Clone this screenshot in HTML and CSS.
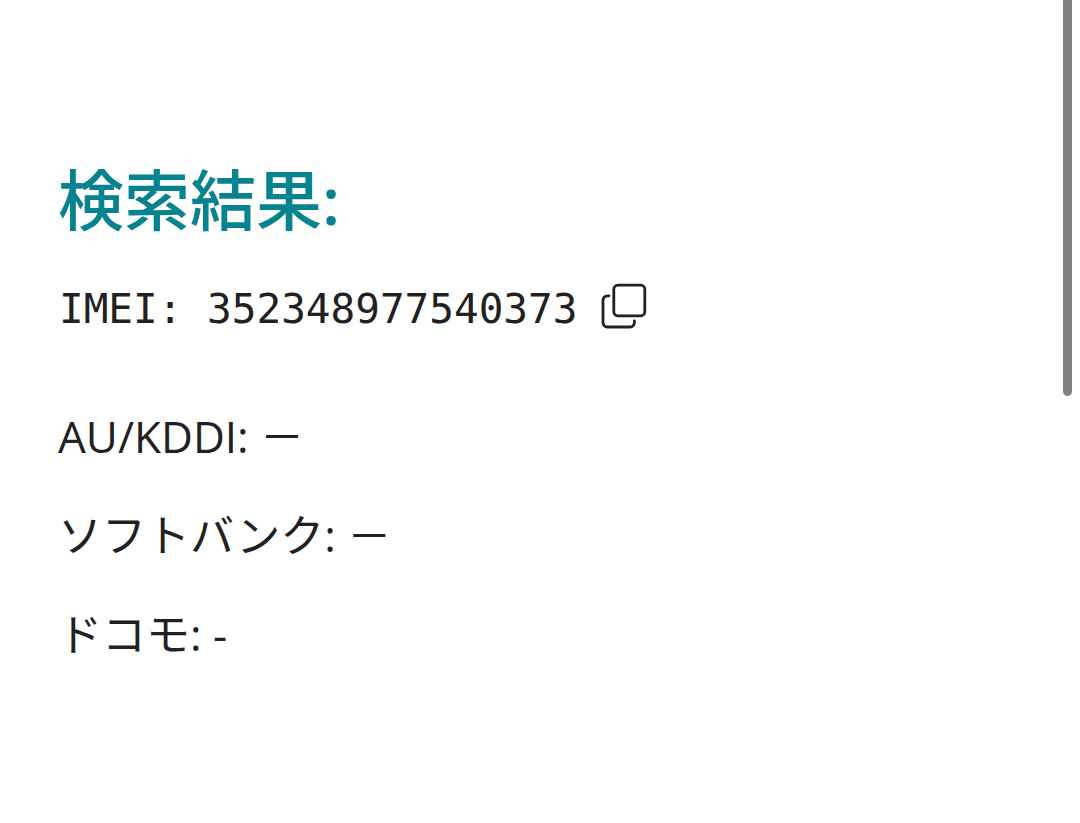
FILE: index.html
```html
<!DOCTYPE html>
<html lang="ja">
<head>
<meta charset="utf-8">
<meta name="viewport" content="width=device-width">
<title>検索結果</title>
<link rel="stylesheet" href="styles.css">
</head>
<body>
<main class="results">
  <h1 class="title">検索結果<span class="title-colon">:</span></h1>
  <div class="imei">
    <span class="imei-text">IMEI: 352348977540373</span>
    <button class="copy" type="button" aria-label="コピー">
      <svg viewBox="0 0 46 46" width="46" height="46" fill="none" stroke="currentColor" stroke-width="2.8" stroke-linecap="round" stroke-linejoin="round"><rect x="12.8" y="2.2" width="31" height="30.6" rx="4"/><path d="M8 12.800H6.400a4.400 4.400 0 0 0-4.400 4.400v22.400a4.400 4.400 0 0 0 4.400 4.400h22.600a4.400 4.400 0 0 0 4.400-4.400v-1.600"/></svg>
    </button>
  </div>
  <ul class="carriers">
    <li>AU/KDDI: －</li>
    <li>ソフトバンク: －</li>
    <li>ドコモ: -</li>
  </ul>
</main>
<div class="scroll-thumb"></div>
</body>
</html>
```
FILE: styles.css
```css
body {
  margin: 0;
  background: #fff;
  color: #212121;
  font-family: "Open Sans", "Noto Sans CJK JP", sans-serif;
}
.results {
  padding: 150px 58px 0;
}
.title {
  margin: 0;
  color: #07838f;
  font-size: 66px;
  line-height: 98px;
  font-weight: 500;
}
.title-colon {
  font-weight: 600;
}
.imei {
  display: flex;
  align-items: center;
  gap: 24px;
  margin-top: 25px;
}
.imei-text {
  padding: 6px 0 0 1px;
  font-family: "DejaVu Sans Mono", monospace;
  font-size: 41px;
  line-height: 60px;
}
.copy {
  display: flex;
  padding: 0;
  border: 0;
  background: none;
  color: #212121;
}
.carriers {
  display: grid;
  gap: 33px;
  margin: 64px 0 0;
  padding: 0;
  list-style: none;
  font-size: 44px;
  line-height: 66px;
}
.scroll-thumb {
  position: absolute;
  top: 0;
  right: 8px;
  width: 9px;
  height: 396px;
  border-radius: 0 0 5px 5px;
  background: #808080;
}
```
